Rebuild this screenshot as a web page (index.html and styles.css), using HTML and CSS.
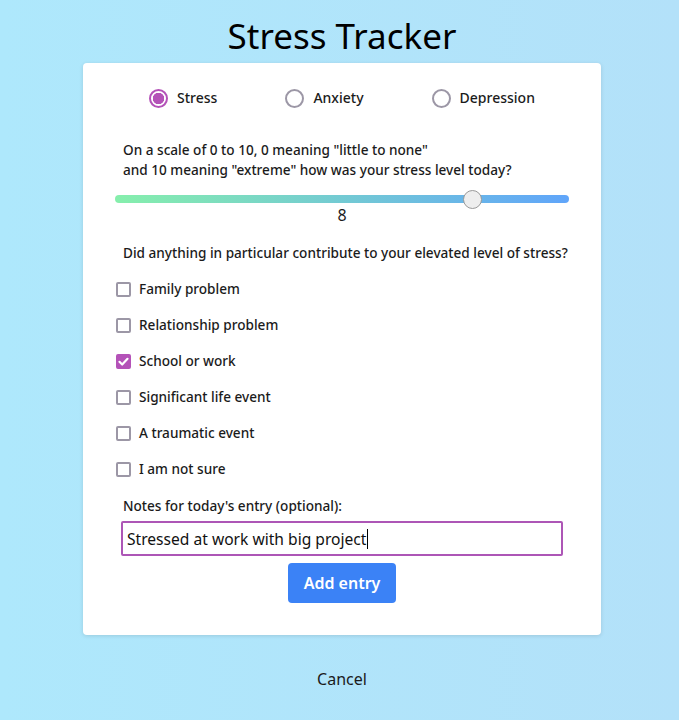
FILE: index.html
```html
<!DOCTYPE html>
<html lang="en">
<head>
<meta charset="utf-8">
<title>Stress Tracker</title>
<link rel="stylesheet" href="styles.css">
</head>
<body>
<main class="page">
  <h1 class="title">Stress Tracker</h1>
  <form class="card">
    <div class="types">
      <label class="choice"><input type="radio" name="type" class="radio" checked><span>Stress</span></label>
      <label class="choice"><input type="radio" name="type" class="radio"><span>Anxiety</span></label>
      <label class="choice"><input type="radio" name="type" class="radio"><span>Depression</span></label>
    </div>
    <p class="question first">On a scale of 0 to 10, 0 meaning "little to none"<br>and 10 meaning "extreme" how was your stress level today?</p>
    <input type="range" class="slider" min="0" max="10" value="8">
    <div class="value">8</div>
    <p class="question q2">Did anything in particular contribute to your elevated level of stress?</p>
    <div class="checks">
      <label class="check"><input type="checkbox" class="box"><span>Family problem</span></label>
      <label class="check"><input type="checkbox" class="box"><span>Relationship problem</span></label>
      <label class="check"><input type="checkbox" class="box" checked><span>School or work</span></label>
      <label class="check"><input type="checkbox" class="box"><span>Significant life event</span></label>
      <label class="check"><input type="checkbox" class="box"><span>A traumatic event</span></label>
      <label class="check"><input type="checkbox" class="box"><span>I am not sure</span></label>
    </div>
    <p class="question notes-label">Notes for today's entry (optional):</p>
    <div class="notes">Stressed at work with big project<span class="caret"></span></div>
    <div class="actions"><button type="button" class="add">Add entry</button></div>
  </form>
  <div class="cancel">Cancel</div>
</main>
</body>
</html>
```

FILE: styles.css
```css
html, body {
  margin: 0;
  padding: 0;
}
body {
  min-height: 720px;
  background: linear-gradient(to right, #aee8fc, #b3e1f9);
  font-family: "Noto Sans", "DejaVu Sans", sans-serif;
  color: #1b1b1b;
}
.page {
  display: flex;
  flex-direction: column;
  align-items: center;
  padding-left: 5px;
}
.title {
  margin: 0 0 5px;
  padding-top: 14px;
  font-size: 35px;
  line-height: 44px;
  font-weight: 400;
  color: #000;
}
.card {
  width: 518px;
  box-sizing: border-box;
  background: #fff;
  border-radius: 4px;
  box-shadow: 0 1px 4px rgba(0, 0, 0, 0.12);
  padding: 25px 32px 32px;
  display: flex;
  flex-direction: column;
}
.types {
  display: flex;
  justify-content: space-around;
  height: 20px;
}
.choice, .check {
  display: flex;
  align-items: center;
  font-size: 14px;
  font-weight: 500;
  line-height: 20px;
}
.check {
  font-size: 13.6px;
}
.radio {
  appearance: none;
  -webkit-appearance: none;
  margin: 0 9px 0 0;
  width: 19px;
  height: 19px;
  border: 2px solid #9c97a6;
  border-radius: 50%;
  box-sizing: border-box;
  background: #fff;
}
.radio:checked {
  border-color: #b452b8;
  background: radial-gradient(circle, #b452b8 0 5.5px, #fff 6px);
}
.question {
  margin: 33px 0 0;
  padding-left: 8px;
  font-size: 13.6px;
  font-weight: 500;
  line-height: 20px;
  white-space: nowrap;
}
.first {
  margin-top: 32px;
}
.slider {
  -webkit-appearance: none;
  appearance: none;
  display: block;
  margin: 13px 0 0;
  width: 454px;
  height: 12px;
  background: transparent;
}
.slider::-webkit-slider-runnable-track {
  height: 8px;
  border-radius: 4px;
  background: linear-gradient(to right, #86efac, #60a5fa);
}
.slider::-webkit-slider-thumb {
  -webkit-appearance: none;
  width: 19px;
  height: 19px;
  margin-top: -5.5px;
  border-radius: 50%;
  background: #eeeeee;
  border: 1px solid #999;
  box-sizing: border-box;
}
.value {
  text-align: center;
  font-size: 16px;
  line-height: 20px;
}
.q2 {
  margin-top: 18px;
}
.checks {
  margin-top: 8px;
  display: flex;
  flex-direction: column;
}
.check {
  height: 36px;
}
.box {
  appearance: none;
  -webkit-appearance: none;
  margin: 0 8px 0 1px;
  width: 15px;
  height: 15px;
  border: 2px solid #9c97a6;
  border-radius: 2px;
  box-sizing: border-box;
  background: #fff;
}
.box:checked {
  border-color: #b452b8;
  background: #b452b8 url("data:image/svg+xml,%3Csvg xmlns='http://www.w3.org/2000/svg' viewBox='0 0 12 12'%3E%3Cpath d='M2.3 6.3l2.5 2.5 4.9-5.3' fill='none' stroke='white' stroke-width='2' stroke-linecap='round' stroke-linejoin='round'/%3E%3C/svg%3E") center / 13px 13px no-repeat;
}
.notes-label {
  margin-top: 9px;
}
.notes {
  margin: 5px 6px 0 6px;
  height: 35px;
  box-sizing: border-box;
  border: 2px solid #ad56b6;
  border-radius: 2px;
  padding: 0 4px;
  display: flex;
  align-items: center;
  font-size: 15.6px;
  color: #111;
}
.caret {
  display: inline-block;
  width: 1px;
  height: 20px;
  background: #000;
  margin-left: 1px;
}
.actions {
  display: flex;
  justify-content: center;
  margin-top: 7px;
}
.add {
  height: 40px;
  width: 108px;
  border: 0;
  border-radius: 4px;
  background: #3b82f6;
  color: #fff;
  font-family: inherit;
  font-size: 16px;
  font-weight: 600;
}
.cancel {
  margin-top: 34px;
  font-size: 16px;
  line-height: 20px;
}
```
